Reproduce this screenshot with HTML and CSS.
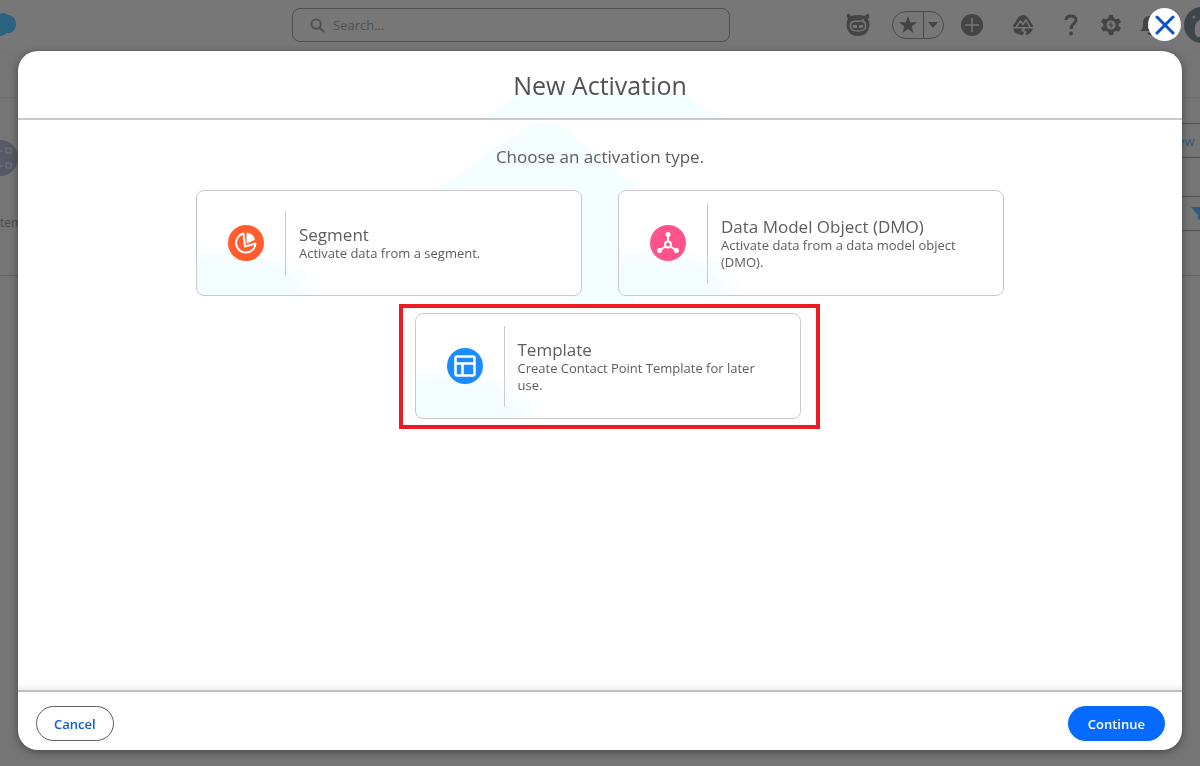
FILE: index.html
```html
<!DOCTYPE html>
<html lang="en">
<head>
    <meta charset="UTF-8">
    <meta name="viewport" content="width=device-width, initial-scale=1.0">
    <title>New Activation</title>
    <link rel="stylesheet" href="styles.css">
</head>
<body>
    <div class="page">
        <header class="topbar">
            <svg class="cloud" width="17" height="26" viewBox="0 0 17 26" aria-hidden="true">
                <path d="M0 2 C3 0 6 1 8 3 C13 3 16 7 16 12 C16 18 12 22 7 21 C5 22 3 24 0 24 Z" fill="#2c6380"/>
            </svg>
            <label class="search">
                <svg width="15" height="15" viewBox="0 0 16 16" fill="none" stroke="#4f4f4f" stroke-width="2" aria-hidden="true">
                    <circle cx="6.5" cy="6.5" r="5"/>
                    <path d="M10 10 L15 15"/>
                </svg>
                <input type="search" placeholder="Search..." aria-label="Search">
            </label>
            <nav class="actions" aria-label="Tools">
                <button type="button" class="icon-btn mascot" aria-label="Assistant">
                    <svg width="26" height="26" viewBox="0 0 26 26">
                        <path d="M2 2 Q4 1 6 4 Q13 2 20 4 Q22 1 24 2 Q25 5 23 7 Q25 10 24.500 14 Q23 24 13 24 Q3 24 1.500 14 Q1 10 3 7 Q1 5 2 2 Z" fill="#444"/>
                        <path d="M5.500 13 Q5.500 10 8.500 9.500 L16 9 L18 8 L18 9.500 Q20.500 10 20.500 13 V15 Q20 19 13 19 Q6 19 5.500 15 Z" fill="#444" stroke="#777" stroke-width="1.500"/>
                        <path d="M7.500 13 H12 V16 H8.500 Z M14 13 H18.500 L17.500 16 H14 Z" fill="#777"/>
                    </svg>
                </button>
                <div class="favorites">
                    <button type="button" aria-label="Favorite">
                        <svg width="18" height="18" viewBox="0 0 18 18"><path d="M9 0 L11.200 6.300 H18 L12.600 10.400 L14.600 17 L9 13 L3.400 17 L5.400 10.400 L0 6.300 H6.800 Z" fill="#444"/></svg>
                    </button>
                    <button type="button" aria-label="Favorites list">
                        <svg width="10" height="6" viewBox="0 0 10 6"><path d="M0 0 H10 L5 6 Z" fill="#444"/></svg>
                    </button>
                </div>
                <button type="button" class="icon-btn add" aria-label="Add">
                    <svg width="24" height="24" viewBox="0 0 24 24"><circle cx="12" cy="12" r="11" fill="#444"/><path d="M12 5 V19 M5 12 H19" stroke="#777" stroke-width="1.500"/></svg>
                </button>
                <button type="button" class="icon-btn guide" aria-label="Guidance center">
                    <svg width="22" height="20" viewBox="0 0 22 20">
                        <path d="M1 12 C1 9 3 8 4 6 C6 2 8 0 11 0 C14 0 16 2 18 6 C19 8 21 9 21 12 Z" fill="#444"/>
                        <path d="M4 12 L8.500 6 L11 9.500 L14 5 L18 12" fill="none" stroke="#777" stroke-width="1.500"/>
                        <path d="M1 13.500 H11 L9 16 L12 17 L11 20 C6 20 2 18 1 13.500 Z M13 13.500 H21 C20 17 17 19.500 13.500 20 L14.500 16.500 L12 15.500 Z" fill="#444"/>
                    </svg>
                </button>
                <button type="button" class="icon-btn help" aria-label="Help">
                    <svg width="14" height="22" viewBox="0 0 14 22"><path d="M2 6 C2 0.500 12 0.500 12 6 C12 10 7 9.500 7 15" fill="none" stroke="#444" stroke-width="3"/><circle cx="7" cy="19.500" r="2" fill="#444"/></svg>
                </button>
                <button type="button" class="icon-btn setup" aria-label="Setup">
                    <svg width="20" height="22" viewBox="0 0 20 22">
                        <path d="M8 1 H12 L12.700 4 L15 5.300 L18 4.400 L20 7.900 L17.600 10 V12 L20 14.100 L18 17.600 L15 16.700 L12.700 18 L12 21 H8 L7.300 18 L5 16.700 L2 17.600 L0 14.100 L2.400 12 V10 L0 7.900 L2 4.400 L5 5.300 L7.300 4 Z" fill="#444"/>
                        <circle cx="10" cy="11" r="4.500" fill="#777"/>
                        <path d="M11 7 L7.500 11.500 H10 L9 15 L12.500 10.500 H10 Z" fill="#444"/>
                    </svg>
                </button>
                <button type="button" class="icon-btn bell" aria-label="Notifications">
                    <svg width="20" height="20" viewBox="0 0 20 20"><path d="M0 16 C3 14 3 11 3 8 C3 3 6 1 10 1 C14 1 17 3 17 8 C17 11 17 14 20 16 Z M7 17.500 H13 Q12 20 10 20 Q8 20 7 17.500 Z" fill="#444"/></svg>
                </button>
                <button type="button" class="icon-btn avatar" aria-label="Profile">
                    <svg width="36" height="36" viewBox="0 0 36 36"><circle cx="18" cy="18" r="18" fill="#3e464a"/><path d="M11 27 Q10 17 14 14 Q18 11 22 14 V30 H13 Z" fill="#777"/><circle cx="10" cy="10" r="1.500" fill="#60717b"/></svg>
                </button>
            </nav>
        </header>
        <main class="list-head">
            <div class="list-info">
                <svg width="36" height="36" viewBox="0 0 36 36" aria-hidden="true">
                    <circle cx="18" cy="18" r="18" fill="#595866"/>
                    <path d="M8 8 h5 v5 h-5 z M24 8 h5 v5 h-5 z M8 23 h5 v5 h-5 z M24 23 h5 v5 h-5 z M17 11 h4 M17 26 h4" fill="none" stroke="#777783"/>
                </svg>
                <p>tem</p>
            </div>
            <div class="list-tools">
                <button type="button">New</button>
                <button type="button" aria-label="Filter">
                    <svg width="18" height="14" viewBox="0 0 18 14"><path d="M0 0 H18 L11 8 V14 L7 12 V8 Z" fill="#2c5d78"/></svg>
                </button>
            </div>
        </main>
    </div>

    <div class="backdrop">
        <section class="modal" role="dialog" aria-modal="true" aria-labelledby="modalTitle">
            <button type="button" class="close" aria-label="Close">
                <svg width="20" height="20" viewBox="0 0 20 20"><path d="M2 2 L18 18 M18 2 L2 18" stroke="#0b51c9" stroke-width="3" stroke-linecap="round"/></svg>
            </button>
            <header class="modal-header">
                <svg class="tint" width="240" height="30" viewBox="0 0 240 30" aria-hidden="true"><path d="M0 30 L28 10 Q60 -4 90 4 L190 4 L240 30 Z" fill="#f4fdff"/></svg>
                <h1 id="modalTitle">New Activation</h1>
            </header>
            <div class="modal-body">
                <svg class="tint" width="200" height="184" viewBox="0 0 200 184" aria-hidden="true"><path d="M0 70 L88 10 Q108 -4 126 6 L200 66 V184 H140 Z" fill="#f4fdff"/></svg>
                <h2>Choose an activation type.</h2>
                <div class="cards">
                    <button type="button" class="card">
                        <svg width="36" height="36" viewBox="0 0 36 36" aria-hidden="true">
                            <circle cx="18" cy="18" r="18" fill="#ff5d2d"/>
                            <path d="M15.500 8.500 A9.700 9.700 0 1 0 27.500 18.500 L17 21.500 Z" fill="none" stroke="#fff" stroke-width="2" stroke-linejoin="round"/>
                            <path d="M19 8 A9 9 0 0 1 26.500 14.500 L19 18 Z" fill="#fff" stroke="#fff" stroke-linejoin="round"/>
                        </svg>
                        <span class="card-text">
                            <span class="card-title">Segment</span>
                            <span class="card-desc">Activate data from a segment.</span>
                        </span>
                    </button>
                    <button type="button" class="card">
                        <svg width="36" height="36" viewBox="0 0 36 36" aria-hidden="true">
                            <circle cx="18" cy="18" r="18" fill="#ff538a"/>
                            <path d="M18 10 V17 M16 21 L10 25.500 M20 21 L26 25.500" stroke="#fff" stroke-width="2"/>
                            <circle cx="18" cy="19.500" r="3" fill="none" stroke="#fff" stroke-width="2"/>
                            <circle cx="18" cy="9.500" r="2.500" fill="#fff"/>
                            <circle cx="9.500" cy="25.500" r="2.500" fill="#fff"/>
                            <circle cx="26.500" cy="25.500" r="2.500" fill="#fff"/>
                        </svg>
                        <span class="card-text">
                            <span class="card-title">Data Model Object (DMO)</span>
                            <span class="card-desc">Activate data from a data model object (DMO).</span>
                        </span>
                    </button>
                </div>
                <div class="highlight">
                    <button type="button" class="card">
                        <svg width="36" height="36" viewBox="0 0 36 36" aria-hidden="true">
                            <circle cx="18" cy="18" r="18" fill="#1b8cff"/>
                            <rect x="8.500" y="8.500" width="19" height="19" rx="1.500" fill="none" stroke="#fff" stroke-width="2.500"/>
                            <path d="M8 15.500 H28 M15.500 16 V27" stroke="#fff" stroke-width="2.500"/>
                        </svg>
                        <span class="card-text">
                            <span class="card-title">Template</span>
                            <span class="card-desc">Create Contact Point Template for later use.</span>
                        </span>
                    </button>
                </div>
            </div>
            <footer class="modal-footer">
                <button type="button" class="btn">Cancel</button>
                <button type="button" class="btn btn-primary">Continue</button>
            </footer>
        </section>
    </div>
</body>
</html>
```

FILE: styles.css
```css
* {
    box-sizing: border-box;
}
body {
    margin: 0;
    background-color: #757575;
    font-family: "Open Sans", "Noto Sans", sans-serif;
    color: #5c5c5c;
}
button, input {
    font-family: inherit;
}
button {
    cursor: pointer;
}
h1, h2, p {
    margin: 0;
    font-weight: 400;
}
svg {
    display: block;
    flex-shrink: 0;
}

/* page behind the dialog */
.page {
    height: 100vh;
    overflow: hidden;
}
.topbar {
    display: flex;
    align-items: center;
    height: 50px;
    background-color: #777;
}
.search {
    display: flex;
    align-items: center;
    gap: 6px;
    flex: 0 1 438px;
    height: 34px;
    margin-left: 275px;
    padding: 0 17px;
    border: 1px solid #4f4f4f;
    border-radius: 8px;
}
.search input {
    width: 100%;
    border: none;
    outline: none;
    background: none;
    font-size: 13px;
    color: #505050;
}
.search input::placeholder {
    color: #505050;
    opacity: 1;
}
.actions {
    display: flex;
    align-items: center;
    margin-left: auto;
    margin-right: -20px;
}
.icon-btn {
    padding: 0;
    border: none;
    background: none;
}
.favorites {
    display: flex;
    width: 52px;
    height: 28px;
    margin: 0 16px 0 21px;
    border: 1px solid #4b4b4b;
    border-radius: 14px;
}
.favorites button {
    display: flex;
    align-items: center;
    justify-content: center;
    flex: 1;
    padding: 0;
    border: none;
    background: none;
}
.favorites button:first-child {
    padding: 0 5px;
    border-right: 1px solid #4b4b4b;
}
.guide {
    margin-left: 28px;
}
.help {
    margin-left: 30px;
}
.setup {
    margin-left: 23px;
}
.bell {
    margin-left: 19px;
}
.avatar {
    margin-left: 24px;
}
.list-head {
    display: flex;
    justify-content: space-between;
    height: 179px;
    margin-top: 47px;
    border-top: 1px solid #707070;
    border-bottom: 1px solid #626262;
}
.list-info {
    padding-top: 42px;
}
.list-info svg {
    margin-left: -18px;
}
.list-info p {
    margin-top: 37px;
    font-size: 12px;
    line-height: 20px;
    color: #4a4a4a;
}
.list-tools {
    display: flex;
    flex-direction: column;
    gap: 38px;
    padding-top: 25px;
    margin-right: -16px;
}
.list-tools button {
    display: flex;
    align-items: center;
    justify-content: center;
    width: 70px;
    height: 35px;
    padding: 0 20px;
    border: 1px solid #4f4f4f;
    background: none;
    font-size: 13px;
    color: #2c5d78;
}
.list-tools button:last-child {
    justify-content: flex-end;
    padding: 0 6px;
}

/* dialog */
.backdrop {
    position: fixed;
    inset: 0;
    display: flex;
    padding: 51px 18px 16px;
}
.modal {
    position: relative;
    display: flex;
    flex-direction: column;
    flex: 1;
    border-radius: 20px;
    background-color: #fff;
    box-shadow: 0 2px 8px rgba(0,0,0,0.4);
}
.close {
    position: absolute;
    top: -43px;
    right: 1px;
    display: flex;
    align-items: center;
    justify-content: center;
    width: 33px;
    height: 33px;
    padding: 0;
    border: none;
    border-radius: 50%;
    background-color: #fff;
}
.modal-header {
    position: relative;
    display: flex;
    align-items: center;
    justify-content: center;
    height: 69px;
    border-bottom: 2px solid #c9c9c9;
}
.modal-header h1 {
    position: relative;
    font-size: 25px;
    line-height: 34px;
    color: #515151;
}
.tint {
    position: absolute;
    left: 50%;
}
.modal-header .tint {
    bottom: 0;
    margin-left: -115px;
}
.modal-body {
    position: relative;
    flex: 1;
    padding-top: 25px;
    box-shadow: inset 0 -8px 8px -8px rgba(0,0,0,0.15);
}
.modal-body .tint {
    top: 0;
    margin-left: -165px;
}
.modal-body h2 {
    position: relative;
    font-size: 17px;
    line-height: 24px;
    text-align: center;
}
.cards {
    position: relative;
    display: flex;
    justify-content: center;
    gap: 36px;
    margin-top: 21px;
}
.card {
    display: flex;
    align-items: center;
    gap: 21px;
    width: 386px;
    height: 106px;
    padding: 0 34px 0 31px;
    border: 1px solid #c9c9c9;
    border-radius: 8px;
    background: radial-gradient(ellipse 100px 52px at 30px 100%, #f3fcff 60%, #fff 100%);
    text-align: left;
    color: #5c5c5c;
}
.card-text {
    flex: 1;
    padding: 14px 0 13px 13px;
    border-left: 1px solid #c9c9c9;
}
.card-title {
    display: block;
    font-size: 17px;
    line-height: 20px;
}
.card-desc {
    display: block;
    font-size: 13px;
    line-height: 17px;
}
.highlight {
    width: fit-content;
    margin: 8px auto 0;
    padding: 5px 15px 6px 12px;
    border: 4px solid #ed1c24;
    position: relative;
    left: 9px;
}
.modal-footer {
    display: flex;
    align-items: center;
    justify-content: space-between;
    height: 60px;
    padding: 5px 17px 0 18px;
    border-top: 2px solid #c0c0c0;
}
.btn {
    height: 35px;
    padding: 0 17px;
    border: 1px solid #5c5c5c;
    border-radius: 18px;
    background-color: #fff;
    font-size: 13px;
    font-weight: 600;
    color: #0b5cd5;
}
.btn-primary {
    padding: 0 19px;
    border-color: #066afe;
    background-color: #066afe;
    color: #fff;
}
```
